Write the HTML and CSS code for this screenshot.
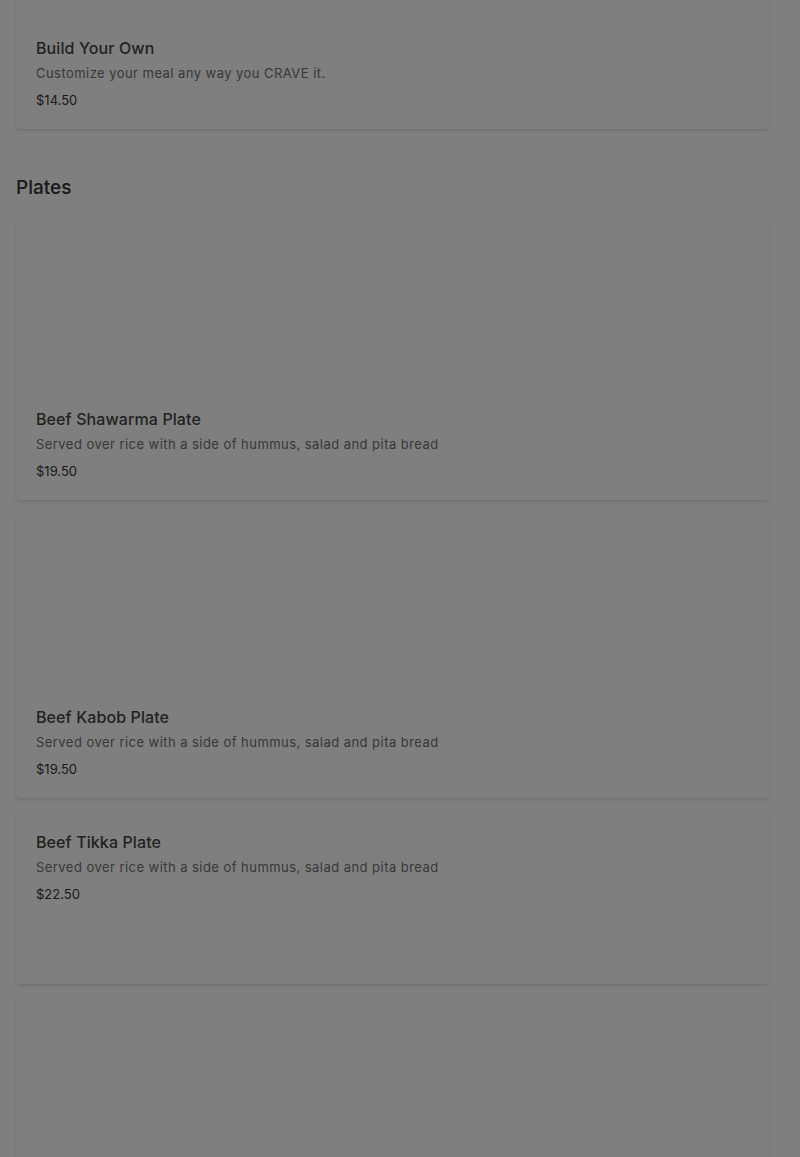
FILE: index.html
```html
<!DOCTYPE html>
<html>
<head>
<meta charset="utf-8">
<link rel="stylesheet" href="styles.css">
</head>
<body>
<main class="menu">
  <section class="category">
    <article class="card">
      <div class="card-image card-image--partial"></div>
      <div class="card-body">
        <h3 class="item-name">Build Your Own</h3>
        <p class="item-desc">Customize your meal any way you CRAVE it.</p>
        <p class="item-price">$14.50</p>
      </div>
    </article>
  </section>

  <section class="category">
    <h2 class="category-title">Plates</h2>
    <article class="card">
      <div class="card-image"></div>
      <div class="card-body">
        <h3 class="item-name">Beef Shawarma Plate</h3>
        <p class="item-desc">Served over rice with a side of hummus, salad and pita bread</p>
        <p class="item-price">$19.50</p>
      </div>
    </article>
    <article class="card">
      <div class="card-image"></div>
      <div class="card-body">
        <h3 class="item-name">Beef Kabob Plate</h3>
        <p class="item-desc">Served over rice with a side of hummus, salad and pita bread</p>
        <p class="item-price">$19.50</p>
      </div>
    </article>
    <article class="card card--text">
      <div class="card-body">
        <h3 class="item-name">Beef Tikka Plate</h3>
        <p class="item-desc">Served over rice with a side of hummus, salad and pita bread</p>
        <p class="item-price">$22.50</p>
      </div>
    </article>
    <article class="card">
      <div class="card-image card-image--tall"></div>
    </article>
  </section>
</main>
<div class="overlay"></div>
</body>
</html>
```
FILE: styles.css
```css
html, body {
  margin: 0;
  padding: 0;
  background: #ffffff;
  font-family: "Inter", "Liberation Sans", sans-serif;
  overflow: hidden;
}

.menu {
  padding: 0 31px 0 16px;
  margin-top: -150px;
}

.category {
  display: flex;
  flex-direction: column;
  gap: 16px;
}

.category + .category {
  margin-top: 47px;
}

.category-title {
  margin: 0 0 2px;
  font-size: 19px;
  line-height: 24px;
  font-weight: 500;
  letter-spacing: 0;
  color: #333333;
}

.card {
  background: #ffffff;
  border-radius: 4px;
  box-shadow: 0 1px 2px rgba(0, 0, 0, 0.08), 0 2px 6px rgba(0, 0, 0, 0.08);
  display: flex;
  flex-direction: column;
  overflow: hidden;
}

.card--text {
  min-height: 170px;
}

.card-image {
  height: 173px;
  background: #ffffff;
}

.card-image--partial {
  height: 170px;
}

.card-image--tall {
  height: 282px;
}

.card-body {
  padding: 20px;
}

.item-name {
  margin: 0;
  font-size: 16px;
  line-height: 16px;
  font-weight: 500;
  letter-spacing: 0.1px;
  color: #444444;
}

.item-desc {
  margin: 7px 0 0;
  font-size: 13px;
  line-height: 20px;
  letter-spacing: 0.45px;
  color: #707070;
}

.item-price {
  margin: 8px 0 0;
  font-size: 13px;
  line-height: 18px;
  color: #333333;
}

.overlay {
  position: fixed;
  inset: 0;
  background: rgba(0, 0, 0, 0.5);
}
```
